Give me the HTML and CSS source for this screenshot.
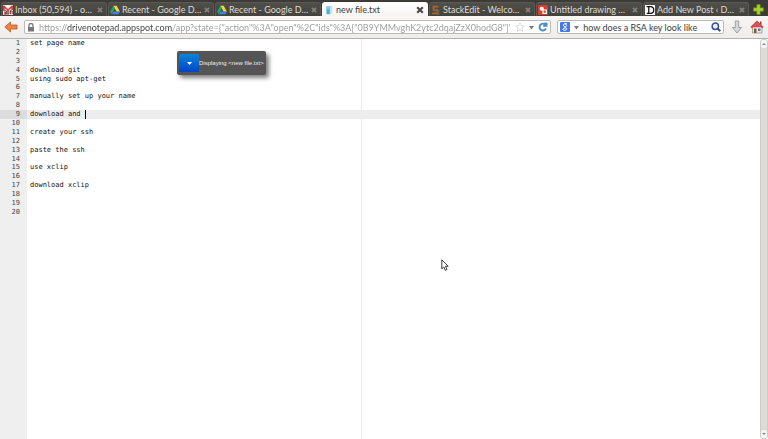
FILE: index.html
```html
<!DOCTYPE html>
<html lang="en">
<head>
  <meta charset="UTF-8" />
  <meta name="viewport" content="width=device-width, initial-scale=1.0"/>
  <title>new file.txt</title>
  <link rel="stylesheet" href="styles.css">
</head>
<body>

  <!-- shared icons -->
  <svg class="defs" aria-hidden="true">
    <symbol id="close" viewBox="0 0 8 8">
      <path d="M1.2 1.2 6.8 6.8M6.8 1.2 1.2 6.8" stroke="currentColor" stroke-width="2.2"/>
    </symbol>
    <symbol id="drive" viewBox="0 0 12 12">
      <path d="M4 1h4l4 7H8z" fill="#fbd13c"/>
      <path d="M4 1 0 8l2 3 4-6.7z" fill="#1da462"/>
      <path d="M4.3 7.7H12L10 11H2z" fill="#3b82e8"/>
    </symbol>
  </svg>

  <nav class="tabs">
    <div class="tab">
      <svg class="favicon" viewBox="0 0 12 12">
        <rect width="12" height="12" rx="1" fill="#f4f1f1"/>
        <path d="M0 1h2l4 4 4-4h2v5h-2V4L6 7 2 4v3H0z" fill="#d93a33"/>
        <path d="M1 7h3v2H2v1h2v1H1M5 7h2v4H5zM8 7h3v4M9 7v4" fill="none" stroke="#7b1d1d"/>
      </svg>
      <a href="#">Inbox (50,594) - o…</a>
      <button class="close" aria-label="Close tab"><svg><use href="#close"/></svg></button>
    </div>
    <div class="tab">
      <svg class="favicon"><use href="#drive"/></svg>
      <a href="#">Recent - Google D…</a>
      <button class="close" aria-label="Close tab"><svg><use href="#close"/></svg></button>
    </div>
    <div class="tab">
      <svg class="favicon"><use href="#drive"/></svg>
      <a href="#">Recent - Google D…</a>
      <button class="close" aria-label="Close tab"><svg><use href="#close"/></svg></button>
    </div>
    <div class="tab active">
      <svg class="favicon" viewBox="0 0 12 12">
        <path d="M3 2 5 1h5v9l-2 1H3z" fill="#bfe6ee"/>
        <path d="M3 2h4v9H3z" fill="#45b3cf"/>
        <path d="M3 2h4v3H3z" fill="#83d0df"/>
      </svg>
      <a href="#">new file.txt</a>
      <button class="close" aria-label="Close tab"><svg><use href="#close"/></svg></button>
    </div>
    <div class="tab">
      <svg class="favicon" viewBox="0 0 12 12">
        <path d="M9 2H3v4h5v4H1" fill="none" stroke="#a9672c" stroke-width="2"/>
        <path d="M4 8h7M4 11h7" stroke="#6f5b49" stroke-width="1"/>
      </svg>
      <a href="#">StackEdit - Welco…</a>
      <button class="close" aria-label="Close tab"><svg><use href="#close"/></svg></button>
    </div>
    <div class="tab">
      <svg class="favicon" viewBox="0 0 12 12">
        <rect width="12" height="12" rx="1" fill="#e2382c"/>
        <circle cx="4.5" cy="4.5" r="2.5" fill="#fff"/>
        <path d="M6 6h4v4H6z" fill="#e2382c" stroke="#fff" stroke-width="1.4"/>
      </svg>
      <a href="#">Untitled drawing …</a>
      <button class="close" aria-label="Close tab"><svg><use href="#close"/></svg></button>
    </div>
    <div class="tab">
      <svg class="favicon" viewBox="0 0 12 12">
        <rect width="12" height="12" fill="#fff"/>
        <path d="M2 2h4.500a4 4 0 0 1 0 8H2M4.500 2v8" fill="none" stroke="#111" stroke-width="1.500"/>
      </svg>
      <a href="#">Add New Post ‹ D…</a>
      <button class="close" aria-label="Close tab"><svg><use href="#close"/></svg></button>
    </div>
    <button class="new-tab" aria-label="New tab">
      <svg viewBox="0 0 10 10"><path d="M3.500 .5h3v3h3v3h-3v3h-3v-3h-3v-3h3z" fill="#a8d32c" stroke="#6d8f14" stroke-width=".6"/></svg>
    </button>
  </nav>

  <header class="toolbar">
    <button class="back" aria-label="Back">
      <svg viewBox="0 0 14 12"><path d="M.8 6 6.500 1v3H13v4H6.500v3z" fill="#ee8244" stroke="#b85a2c" stroke-width=".8" stroke-linejoin="round"/></svg>
    </button>

    <div class="field address">
      <svg class="lock" viewBox="0 0 8 9"><path d="M2 4V2.500a2 2 0 0 1 4 0V4" fill="none" stroke="#777" stroke-width="1.300"/><rect x="1" y="4" width="6" height="4.500" fill="#777"/></svg>
      <input class="url" type="text" aria-label="Address" value='https://drivenotepad.appspot.com/app?state={"action"%3A"open"%2C"ids"%3A["0B9YMMvghK2ytc2dqajZzX0hodG8"]&apos;'>
      <button aria-label="Bookmark"><svg class="star" viewBox="0 0 10 10"><path d="m5 .8 1.300 2.900 3.100.3L7 6.100l.7 3.100L5 7.600 2.300 9.200 3 6.100.6 4l3.100-.3z" fill="#fff" stroke="#d0d0d0" stroke-width=".8"/></svg></button>
      <button aria-label="History"><svg class="arrow" viewBox="0 0 5 5"><path d="M0 1h5L2.500 4.500z" fill="#777"/></svg></button>
      <button aria-label="Reload"><svg class="reload" viewBox="0 0 10 10"><path d="M8 6.500A3.400 3.400 0 1 1 6.500 2" fill="none" stroke="#4f8fc9" stroke-width="1.900"/><path d="M5.500.8 9.500.5v4.200H5z" fill="#4f8fc9"/></svg></button>
    </div>

    <div class="field search">
      <svg class="google" viewBox="0 0 10 10">
        <rect width="10" height="10" rx="1" fill="#4378ea"/>
        <path d="M7 1.700H5a1.500 1.500 0 0 0 0 3c2.500 0 1.500-3 0-3M5 4.700c-1 .8 2 1 1.800 2.400S3 8.900 3 7.400 5 6 5.500 6" fill="none" stroke="#fff"/>
      </svg>
      <button aria-label="Search engine"><svg class="arrow" viewBox="0 0 5 5"><path d="M0 1h5L2.500 4.500z" fill="#777"/></svg></button>
      <input type="text" aria-label="Search" value="how does a RSA key look like">
      <button aria-label="Go"><svg class="glass" viewBox="0 0 10 10"><circle cx="4.300" cy="4.200" r="3.200" fill="#eef2fb" stroke="#31509f" stroke-width="1.500"/><path d="m6.700 6.600 2.600 2.600" stroke="#3b3f66" stroke-width="1.900"/></svg></button>
    </div>

    <button aria-label="Downloads">
      <svg class="large" viewBox="0 0 14 14"><path d="M5.300 1h3.400v6.500h3L7 13 2.300 7.500h3z" fill="#d7d9d9" stroke="#8b8f90" stroke-width=".8"/></svg>
    </button>
    <button aria-label="Home">
      <svg class="large" viewBox="0 0 14 14"><path d="M2.500 6.500h9.500V13H2.500z" fill="#eee9df" stroke="#8d8780" stroke-width=".7"/><path d="M10 1.500h1.500V5L10 4z" fill="#8d4540"/><path d="M7 .8.7 7l1.200 1L7 3.300 12.100 8l1.200-1z" fill="#d84846" stroke="#b33634" stroke-width=".5"/><path d="M7 3.500 3 7.200h8z" fill="#d84846"/><path d="M4 8.500h2.500V13H4z" fill="#8a5830"/><path d="M8 8.500h2.500V11H8z" fill="#577ab0"/></svg>
    </button>
  </header>

  <main class="editor">
    <ol class="gutter">
      <li>1</li><li>2</li><li>3</li><li>4</li><li>5</li>
      <li>6</li><li>7</li><li>8</li><li class="current">9</li><li>10</li>
      <li>11</li><li>12</li><li>13</li><li>14</li><li>15</li>
      <li>16</li><li>17</li><li>18</li><li>19</li><li>20</li>
    </ol>

    <div class="code">
      <div class="print-margin"></div>
      <div class="active-line"><span class="caret"></span></div>
      <textarea aria-label="File content" rows="20" spellcheck="false">
set page name


download git
using sudo apt-get

manually set up your name

download and 

create your ssh

paste the ssh

use xclip

download xclip


</textarea>
    </div>

    <div class="scrollbar">
      <button aria-label="Scroll up"><svg viewBox="0 0 4 4"><path d="M0 3h4L2 1z" fill="#888"/></svg></button>
      <button aria-label="Scroll down"><svg viewBox="0 0 4 4"><path d="M0 1h4L2 3z" fill="#888"/></svg></button>
    </div>

    <div class="notice" role="status">
      <button aria-label="Menu"><svg viewBox="0 0 5 5"><path d="M0 1h5L2.500 4z" fill="#fff"/></svg></button>
      <span>Displaying &lt;new file.txt&gt;</span>
    </div>

    <svg class="pointer" viewBox="0 0 8 12"><path d="M.8.8v9l2-1.800 1.500 3.300 1.700-.8L4.500 7.300h2.700z" fill="#fff" stroke="#222" stroke-width=".9"/></svg>
  </main>

</body>
</html>
```
FILE: styles.css
```css
:root {
  --ui-font: Lato, "Open Sans", sans-serif;
  --code-font: "DejaVu Sans Mono", monospace;
  --line: 1.27em;
}

* {
  box-sizing: border-box;
}

body {
  margin: 0;
  height: 100vh;
  display: flex;
  flex-direction: column;
  overflow: hidden;
  font-family: var(--ui-font);
  font-size: 9px;
  background: #fff;
}

button {
  display: flex;
  align-items: center;
  justify-content: center;
  flex: none;
  padding: 0;
  border: none;
  background: none;
  cursor: pointer;
}

input {
  min-width: 0;
  padding: 0;
  border: none;
  outline: none;
  background: none;
  font: inherit;
  color: #3c3c3c;
}

svg {
  display: block;
  flex: none;
}

.defs {
  position: absolute;
  width: 0;
  height: 0;
}

/* tabs */
.tabs {
  display: flex;
  height: 16px;
  padding: 2px 1px 0;
  background: #3c3b37;
}

.tab {
  display: flex;
  align-items: center;
  flex: 1;
  min-width: 0;
  gap: 2px;
  padding: 0 3px 0 1px;
  margin-right: 1px;
  border: 1px solid #5b5953;
  border-bottom: none;
  border-radius: 3px 3px 0 0;
  background: linear-gradient(#504e49, #43423d);
  color: #dfdbd2;
}

.tab a {
  flex: 1;
  overflow: hidden;
  white-space: nowrap;
  line-height: 12px;
  color: inherit;
  text-decoration: none;
}

.tab.active {
  border-color: #fafafa;
  background: linear-gradient(#fff, #f5f4f3);
  color: #3c3c3c;
}

.favicon {
  width: 10px;
  height: 10px;
}

.close {
  color: #85827b;
}

.close svg {
  width: 6px;
  height: 6px;
}

.active .close {
  color: #4c4c4c;
}

.active .close svg {
  width: 8px;
  height: 8px;
}

.new-tab {
  width: 17px;
}

.new-tab svg {
  width: 11px;
  height: 11px;
}

/* navigation toolbar */
.toolbar {
  display: flex;
  align-items: center;
  gap: 6px;
  height: 23px;
  padding: 0 4px;
  border-bottom: 1px solid #b4b2b0;
  background: linear-gradient(#f7f6f5, #eeedec);
}

.back svg {
  width: 14px;
  height: 12px;
}

.field {
  display: flex;
  align-items: center;
  gap: 4px;
  height: 14px;
  padding: 0 2px;
  border: 1px solid #bdbab7;
  border-radius: 2px;
  background: #fff;
}

.field input {
  flex: 1;
  height: 12px;
}

.address {
  flex: 532;
}

.search {
  flex: 164;
}

.url {
  -webkit-text-fill-color: transparent;
  background: linear-gradient(90deg, #999 28px, #3c3c3c 28px, #3c3c3c 134px, #999 134px);
  -webkit-background-clip: text;
  background-clip: text;
}

.lock {
  width: 8px;
  height: 9px;
}

.star,
.reload,
.google,
.glass {
  width: 10px;
  height: 10px;
}

.arrow {
  width: 5px;
  height: 5px;
}

.large {
  width: 14px;
  height: 14px;
}

/* editor */
.editor {
  position: relative;
  display: flex;
  flex: 1;
  min-height: 0;
  font-family: var(--code-font);
  font-size: 7px;
  line-height: var(--line);
}

.gutter {
  flex: none;
  width: 27px;
  margin: 0;
  padding: 0;
  list-style: none;
  text-align: right;
  background: #efefef;
  color: #444;
}

.gutter li {
  padding-right: 7px;
}

.gutter .current {
  background: #dcdcdc;
}

.code {
  position: relative;
  flex: 1;
}

.code textarea {
  position: relative;
  display: block;
  width: 100%;
  padding: 0 3px;
  border: none;
  outline: none;
  resize: none;
  overflow: hidden;
  background: none;
  font: inherit;
  color: #111;
}

.active-line {
  position: absolute;
  top: calc(8 * var(--line));
  left: 0;
  right: 0;
  height: var(--line);
  padding-left: 3px;
  background: #ededed;
}

.caret {
  display: block;
  height: 100%;
  margin-left: 13ch;
  border-left: 1px solid #000;
}

.print-margin {
  position: absolute;
  top: 0;
  bottom: 0;
  left: calc(5px + 78ch);
  border-left: 1px solid #ebebeb;
}

.scrollbar {
  display: flex;
  flex-direction: column;
  justify-content: space-between;
  width: 8px;
  border: 1px solid #cfcbc9;
  border-radius: 3px;
  background: #dedad9;
}

.scrollbar button {
  height: 8px;
  border-radius: 2px;
  background: #f7f6f6;
}

.scrollbar svg {
  width: 4px;
  height: 4px;
}

.notice {
  position: absolute;
  top: 12px;
  left: 177px;
  display: flex;
  align-items: center;
  padding: 3px 2px;
  border-radius: 2px;
  background: #555;
  box-shadow: 3px 3px 4px rgba(0, 0, 0, 0.5);
  font-family: "Liberation Sans", sans-serif;
  font-size: 6px;
  color: #eee;
}

.notice button {
  width: 20px;
  height: 18px;
  border-radius: 1px;
  background: linear-gradient(#0a84d8, #0045c8);
}

.notice button svg {
  width: 5px;
  height: 5px;
}

.pointer {
  position: absolute;
  top: 220px;
  left: 441px;
  width: 8px;
  height: 12px;
}
```
